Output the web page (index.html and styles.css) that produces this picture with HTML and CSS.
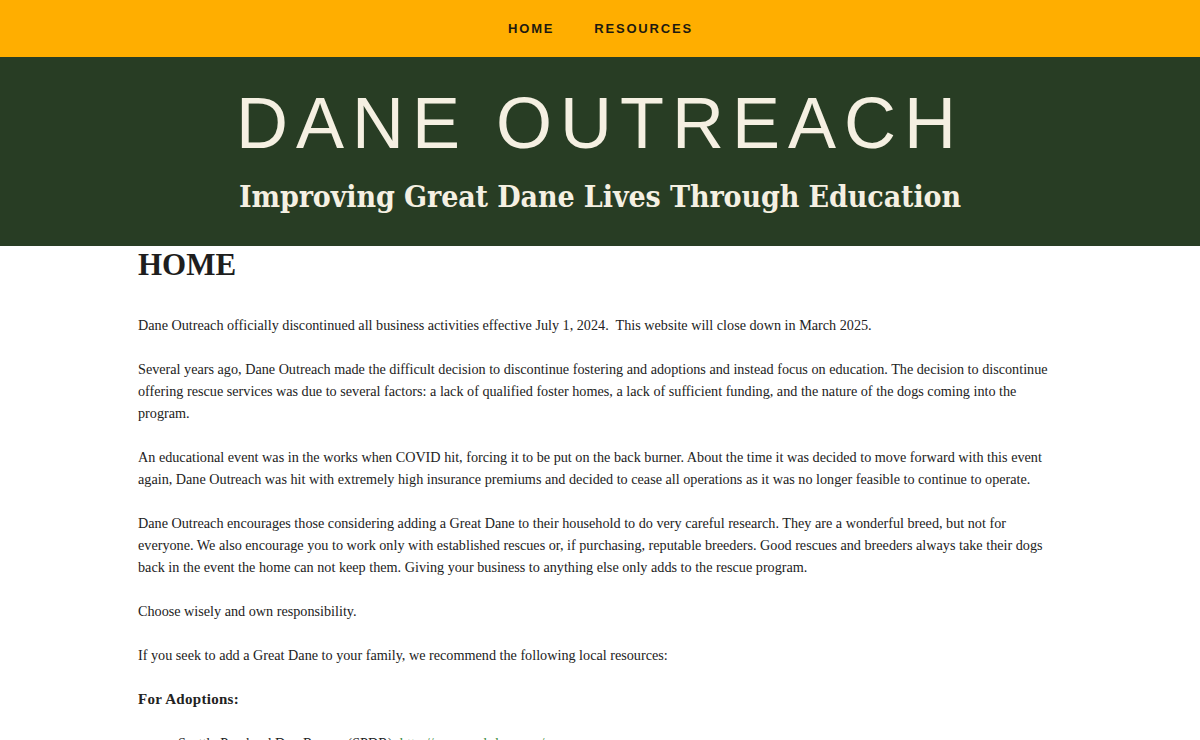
FILE: index.html
```html
<!DOCTYPE html>
<html>
<head>
<meta charset="utf-8">
<link rel="stylesheet" href="styles.css">
</head>
<body>
<nav class="nav">
  <a class="nav-link" href="#">HOME</a>
  <a class="nav-link" href="#">RESOURCES</a>
</nav>
<header class="banner">
  <h1 class="site-title">DANE OUTREACH</h1>
  <p class="tagline">Improving Great Dane Lives Through Education</p>
</header>
<main class="content">
  <h2 class="page-title">HOME</h2>
  <p>Dane Outreach officially discontinued all business activities effective July 1, 2024.&nbsp; This website will close down in March 2025.</p>
  <p>Several years ago, Dane Outreach made the difficult decision to discontinue fostering and adoptions and instead focus on education. The decision to discontinue offering rescue services was due to several factors: a lack of qualified foster homes, a lack of sufficient funding, and the nature of the dogs coming into the program.</p>
  <p>An educational event was in the works when COVID hit, forcing it to be put on the back burner. About the time it was decided to move forward with this event again, Dane Outreach was hit with extremely high insurance premiums and decided to cease all operations as it was no longer feasible to continue to operate.</p>
  <p>Dane Outreach encourages those considering adding a Great Dane to their household to do very careful research. They are a wonderful breed, but not for everyone. We also encourage you to work only with established rescues or, if purchasing, reputable breeders. Good rescues and breeders always take their dogs back in the event the home can not keep them. Giving your business to anything else only adds to the rescue program.</p>
  <p>Choose wisely and own responsibility.</p>
  <p>If you seek to add a Great Dane to your family, we recommend the following local resources:</p>
  <p><strong class="label">For Adoptions:</strong></p>
  <ul class="list">
    <li>Seattle Purebred Dog Rescue (SPDR): <a class="link" href="#">http://www.spdrdogs.org/</a></li>
  </ul>
</main>
</body>
</html>
```
FILE: styles.css
```css
html, body {
  margin: 0;
  padding: 0;
  background: #ffffff;
}
body {
  font-family: "Liberation Serif", "DejaVu Serif", serif;
  color: #222222;
}
.nav {
  height: 57px;
  background: #ffae00;
  display: flex;
  justify-content: center;
  align-items: center;
  gap: 40px;
  box-sizing: border-box;
  padding-left: 1px;
}
.nav-link {
  font-family: "Liberation Sans", Arial, sans-serif;
  font-weight: bold;
  font-size: 13px;
  letter-spacing: 1.8px;
  color: #1d1a10;
  text-decoration: none;
}
.banner {
  background: #283d24;
  height: 189px;
  box-sizing: border-box;
  padding-top: 28px;
  text-align: center;
  color: #f5f0e2;
}
.site-title {
  margin: 0;
  font-family: "Liberation Sans", Arial, sans-serif;
  font-weight: normal;
  font-size: 72px;
  line-height: 76px;
  letter-spacing: 8px;
}
.tagline {
  margin: 16px 0 0;
  font-family: "DejaVu Serif Condensed", "DejaVu Serif", serif;
  font-weight: bold;
  font-size: 30px;
  line-height: 40px;
  letter-spacing: -0.1px;
}
.content {
  width: 924px;
  margin: 0 auto;
  padding-top: 1px;
}
.page-title {
  margin: 0 0 31px;
  font-size: 31px;
  line-height: 36px;
  font-weight: bold;
  color: #1e1e1e;
}
.content p {
  margin: 0 0 22px;
  font-size: 14.2px;
  line-height: 22px;
}
.label {
  font-size: 15px;
  letter-spacing: 0.3px;
}
.list {
  margin: 0;
  padding-left: 40px;
  font-size: 14.2px;
  line-height: 22px;
}
.link {
  color: #3c8a3c;
  text-decoration: none;
}
```
